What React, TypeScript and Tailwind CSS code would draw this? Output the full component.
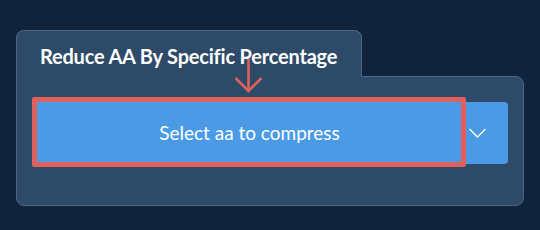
import React from "react";

export default function App() {
  return (
    <div className="w-[540px] h-[230px] bg-[#11233a] pt-[30px] pl-[16px]" style={{ fontFamily: "Lato, 'Noto Sans', sans-serif" }}>
      <div className="relative z-10 -mb-px w-[346px] h-[47px] bg-[#2d4a69] border border-b-0 border-[#4e6684] rounded-t-lg pl-[23px] pt-[13px]">
        <span className="text-[20px] font-bold text-white leading-[24px] tracking-[-0.2px]">Reduce AA By Specific Percentage</span>
      </div>
      <div className="w-[508px] h-[130px] bg-[#2d4a69] border border-[#4e6684] rounded-b-lg rounded-tr-lg pl-[16px] pt-[25px]">
        <div className="relative flex w-[475px] h-[62px] bg-[#4b9ae6] rounded-r-[4px]">
          <div className="w-[433px] flex items-center justify-center text-white text-[19px] font-normal">
            Select aa to compress
          </div>
          <div className="flex-1 flex items-center pl-[3px]">
            <svg width="17" height="10" viewBox="0 0 17 10" fill="none">
              <polyline points="0.5,1 8.5,9 16.5,1" stroke="white" strokeWidth="1.4" />
            </svg>
          </div>
          <div className="absolute left-[-1px] top-[-5px] w-[434px] h-[70px] border-[5px] border-[#df605c] rounded-[2px]" />
          <svg className="absolute z-20 left-[201px] top-[-43px]" width="30" height="36" viewBox="0 0 30 36" fill="none">
            <line x1="14.5" y1="0" x2="14.5" y2="33" stroke="#df605c" strokeWidth="2.6" />
            <polyline points="1.5,19 14.5,32 27.5,19" stroke="#df605c" strokeWidth="2.6" />
          </svg>
        </div>
      </div>
    </div>
  );
}
